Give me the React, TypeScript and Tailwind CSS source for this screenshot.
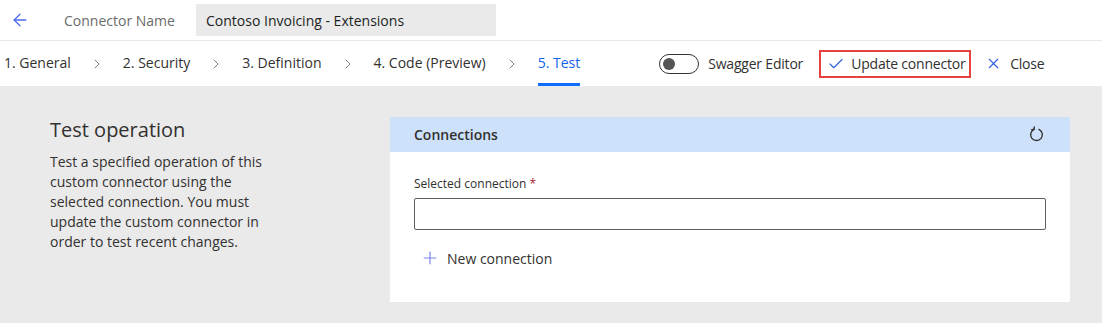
import { Check, X, Plus, ChevronRight, ArrowLeft } from 'lucide-react'

const steps = ['1. General', '2. Security', '3. Definition', '4. Code (Preview)', '5. Test']

function RefreshIcon() {
  return (
    <svg width="17" height="17" viewBox="0 0 16 16" fill="none" stroke="#323130" strokeWidth="1.3" strokeLinecap="round">
      <path d="M5.7 3.2 A5.5 5.5 0 1 0 10.3 3.2" />
      <path d="M5.7 3.2 L5.9 0.9" />
      <path d="M5.7 3.2 L3.5 3.4" />
    </svg>
  )
}

export default function App() {
  return (
    <div
      className="w-[1102px] h-[323px] overflow-hidden bg-white text-[#323130] flex flex-col"
      style={{ fontFamily: '"Segoe UI", "Open Sans", sans-serif' }}
    >
      {/* header */}
      <div className="h-[41px] flex items-center border-b border-[#e8e8e8] shrink-0">
        <div className="w-[40px] flex justify-center">
          <ArrowLeft size={20} strokeWidth={1.6} className="text-[#4f6bed]" />
        </div>
        <div className="ml-[24px] w-[132px] text-[14px] text-[#6b6b6b]">Connector Name</div>
        <div className="h-[32px] w-[300px] bg-[#eaeaea] flex items-center px-[10px] text-[14px] text-[#201f1e]">
          Contoso Invoicing - Extensions
        </div>
      </div>

      {/* steps */}
      <div className="h-[45px] flex items-stretch shrink-0 text-[14px] whitespace-nowrap">
        <div className="flex items-stretch pl-[4px]">
          {steps.map((s, i) => {
            const active = i === steps.length - 1
            return (
              <div key={s} className="flex items-stretch">
                <div
                  className={
                    active
                      ? 'flex items-center border-b-[3px] border-[#0f6cff] text-[#0f62f0] pt-[1px]'
                      : 'flex items-center border-b-[3px] border-transparent pt-[1px]'
                  }
                >
                  {s}
                </div>
                {!active && (
                  <div className="flex items-center px-[18px]">
                    <ChevronRight size={16} strokeWidth={1.2} className="text-[#605e5c]" />
                  </div>
                )}
              </div>
            )
          })}
        </div>
        <div className="flex items-center ml-[79px] tracking-[-0.2px]">
          <div className="w-[40px] h-[20px] rounded-full border border-[#333] flex items-center px-[3px]">
            <div className="w-[12px] h-[12px] rounded-full bg-[#555]" />
          </div>
          <span className="ml-[9px]">Swagger Editor</span>
          <div className="ml-[16px] h-[28px] w-[152px] border-2 border-[#e5433d] flex items-center pl-[6px]">
            <Check size={18} strokeWidth={1.5} className="text-[#2f5fe0]" />
            <span className="ml-[6px]">Update connector</span>
          </div>
          <div className="ml-[14px] flex items-center">
            <X size={17} strokeWidth={1.5} className="text-[#2f5fe0]" />
            <span className="ml-[8px]">Close</span>
          </div>
        </div>
      </div>

      {/* content */}
      <div className="flex-1 bg-[#eaeaea] flex pl-[50px] pr-[32px] pt-[31px]">
        <div className="w-[340px]">
          <div className="text-[20px] leading-[26px] text-[#323130]">Test operation</div>
          <p className="mt-[9px] w-[220px] text-[14px] leading-[20px] text-[#323130]">
            Test a specified operation of this custom connector using the selected connection. You must update the
            custom connector in order to test recent changes.
          </p>
        </div>
        <div className="flex-1 h-[185px] bg-white flex flex-col">
          <div className="h-[35px] bg-[#cde1fb] flex items-center justify-between pl-[24px] pr-[25px]">
            <span className="text-[14px] font-semibold text-[#323130]">Connections</span>
            <RefreshIcon />
          </div>
          <div className="px-[24px] pt-[24px]">
            <div className="text-[12px] leading-[16px] text-[#323130]">
              Selected connection <span className="text-[#a4262c]">*</span>
            </div>
            <div className="mt-[6px] h-[32px] border border-[#605e5c] rounded-[2px]" />
            <div className="mt-[16px] flex items-center pl-[6px] h-[24px]">
              <Plus size={20} strokeWidth={1.4} className="text-[#7b83eb]" />
              <span className="ml-[7px] text-[14px]">New connection</span>
            </div>
          </div>
        </div>
      </div>
    </div>
  )
}
